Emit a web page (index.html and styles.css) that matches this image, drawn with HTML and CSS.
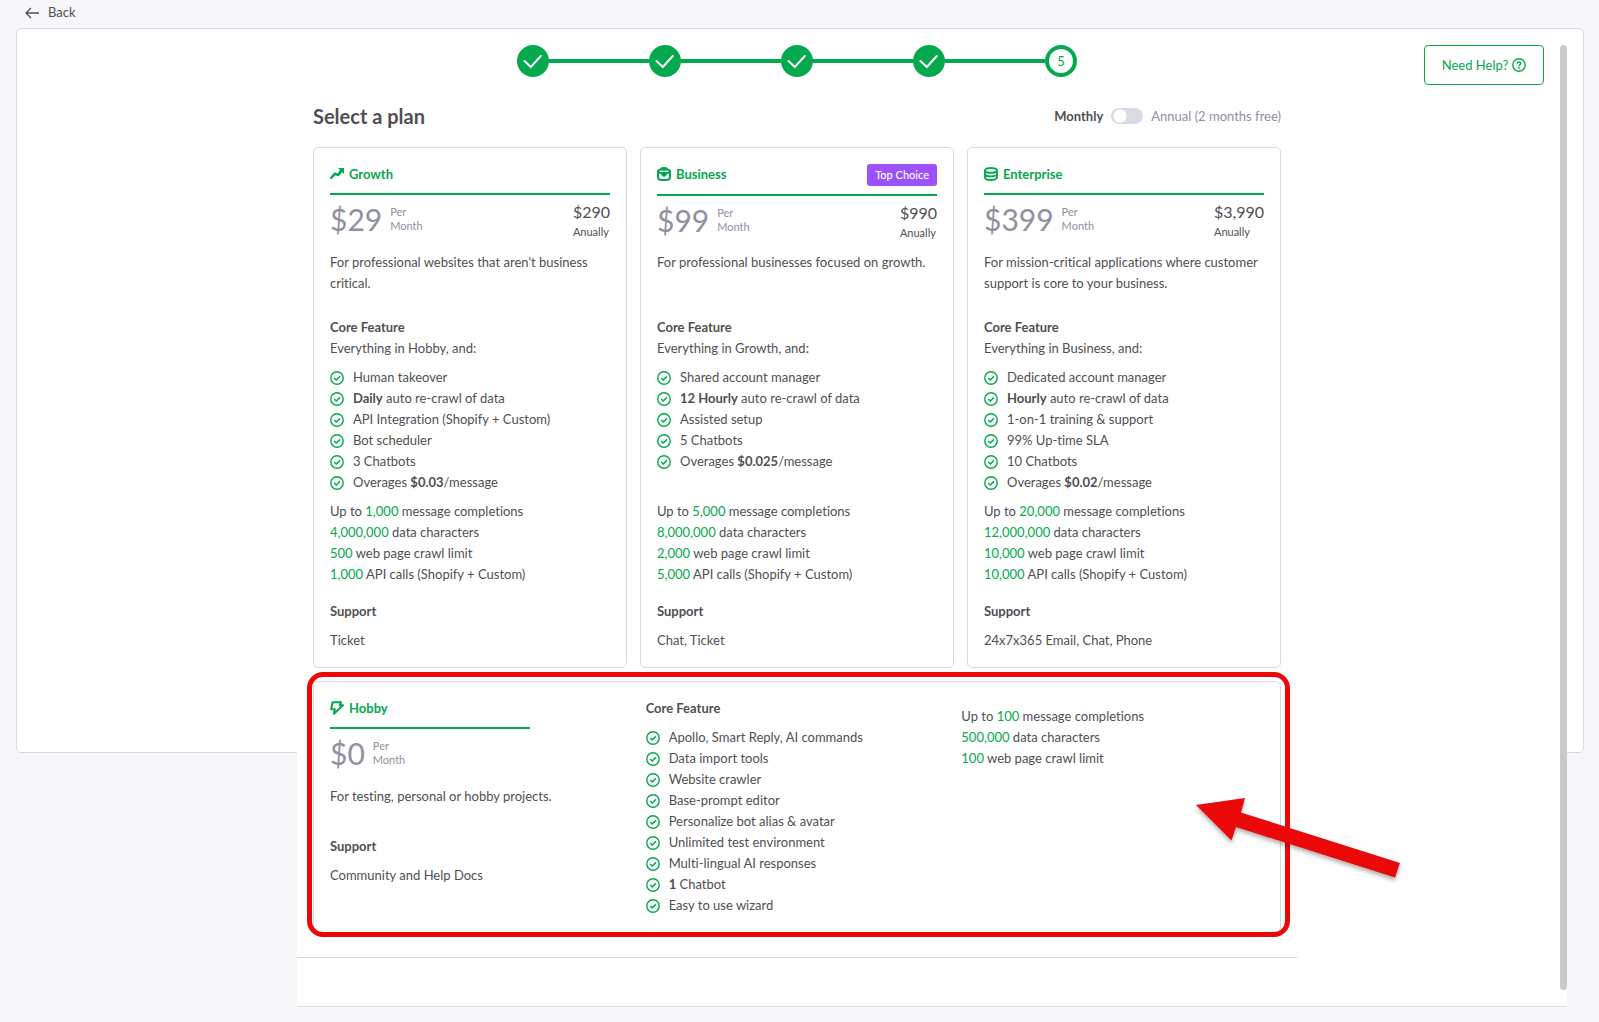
FILE: index.html
```html
<!DOCTYPE html>
<html lang="en">
<head>
<meta charset="utf-8">
<meta name="viewport" content="width=device-width, initial-scale=1">
<title>Select a plan</title>
<link rel="stylesheet" href="styles.css">
</head>
<body>
<svg class="sprite" aria-hidden="true">
  <symbol id="check-circle" viewBox="0 0 14 14"><circle cx="7" cy="7" r="6.200" fill="none" stroke="currentColor" stroke-width="1.400"/><path d="M4.200 7l2.100 2 3.600-3.600" fill="none" stroke="currentColor" stroke-width="1.500"/></symbol>
  <symbol id="check" viewBox="0 0 32 32"><path d="M7.500 16l6.300 6 10-11" fill="none" stroke="currentColor" stroke-width="2" stroke-linecap="round"/></symbol>
  <symbol id="trend" viewBox="0 0 14 14"><path d="M8 1h6v6l-1.700-1.700-4 4.200-2.800-1.200L1.500 12H0v-1.500l4.500-5.200 3.200 1.200 2.300-3.500z" fill="currentColor"/></symbol>
  <symbol id="briefcase" viewBox="0 0 14 14"><path d="M3.500 1.500Q4 0 5.500 0h3Q10 0 10.500 1.500 14 1.800 14 4.500v5Q14 14 9.500 14h-5Q0 14 0 9.500v-5Q0 1.800 3.500 1.500z" fill="currentColor"/><path d="M2.500 4.300h9" stroke="#fff" stroke-width="1.300"/><path d="M2 6.800h2Q4.700 9.800 7 9.800t3-3h2v2.700q0 2.500-2.500 2.500h-5Q2 12 2 9.500z" fill="#fff"/><path d="M4.800 6.500h4.400Q9 8.700 7 8.700T4.800 6.500z" fill="currentColor"/></symbol>
  <symbol id="database" viewBox="0 0 14 14"><g fill="none" stroke="currentColor" stroke-width="1.900"><ellipse cx="7" cy="3.400" rx="6" ry="2.400"/><path d="M1 3.400v7.200C1 12 3.700 13 7 13s6-1 6-2.400V3.400M1 7c0 1.400 2.700 2.400 6 2.400S13 8.400 13 7"/></g></symbol>
  <symbol id="bolt" viewBox="0 0 14 14"><path d="M2.500 1.200h8.700L9.700 4.300H13L4 12.800l.8-4.600H1.200z" fill="none" stroke="currentColor" stroke-width="2" stroke-linejoin="round"/></symbol>
</svg>

<nav class="topbar">
  <a class="back" href="#">
    <svg class="back-icon" viewBox="0 0 14 12" aria-hidden="true"><path d="M6 1L1 6l5 5M1 6h13" fill="none" stroke="currentColor" stroke-width="1.300"/></svg>
    Back
  </a>
</nav>

<main class="panel">
  <div class="wizard">
    <div class="content">
      <ol class="stepper">
        <li class="step"><svg><use href="#check"/></svg></li>
        <li class="step"><svg><use href="#check"/></svg></li>
        <li class="step"><svg><use href="#check"/></svg></li>
        <li class="step"><svg><use href="#check"/></svg></li>
        <li class="step step-current">5</li>
      </ol>

      <header class="heading">
        <h1>Select a plan</h1>
        <label class="billing"><b>Monthly</b><input type="checkbox" class="switch" role="switch"><span class="muted">Annual (2 months free)</span></label>
      </header>

      <div class="plans">
        <section class="card">
          <div class="card-top">
            <h2 class="plan-name"><svg class="icon"><use href="#trend"/></svg>Growth</h2>
            <div class="price"><span class="amount">$29</span><span class="period">Per<br>Month</span><p class="annual">$290<small>Anually</small></p></div>
          </div>
          <p class="summary">For professional websites that aren't business critical.</p>
          <h3>Core Feature</h3>
          <p>Everything in Hobby, and:</p>
          <ul class="features">
            <li><svg class="icon"><use href="#check-circle"/></svg><span>Human takeover</span></li>
            <li><svg class="icon"><use href="#check-circle"/></svg><span><b>Daily</b> auto re-crawl of data</span></li>
            <li><svg class="icon"><use href="#check-circle"/></svg><span>API Integration (Shopify + Custom)</span></li>
            <li><svg class="icon"><use href="#check-circle"/></svg><span>Bot scheduler</span></li>
            <li><svg class="icon"><use href="#check-circle"/></svg><span>3 Chatbots</span></li>
            <li><svg class="icon"><use href="#check-circle"/></svg><span>Overages <b>$0.03</b>/message</span></li>
          </ul>
          <p>Up to <em>1,000</em> message completions</p>
          <p><em>4,000,000</em> data characters</p>
          <p><em>500</em> web page crawl limit</p>
          <p><em>1,000</em> API calls (Shopify + Custom)</p>
          <h3 class="support">Support</h3>
          <p>Ticket</p>
        </section>

        <section class="card">
          <div class="card-top">
            <h2 class="plan-name"><svg class="icon"><use href="#briefcase"/></svg>Business<span class="badge">Top Choice</span></h2>
            <div class="price"><span class="amount">$99</span><span class="period">Per<br>Month</span><p class="annual">$990<small>Anually</small></p></div>
          </div>
          <p class="summary">For professional businesses focused on growth.</p>
          <h3>Core Feature</h3>
          <p>Everything in Growth, and:</p>
          <ul class="features">
            <li><svg class="icon"><use href="#check-circle"/></svg><span>Shared account manager</span></li>
            <li><svg class="icon"><use href="#check-circle"/></svg><span><b>12 Hourly</b> auto re-crawl of data</span></li>
            <li><svg class="icon"><use href="#check-circle"/></svg><span>Assisted setup</span></li>
            <li><svg class="icon"><use href="#check-circle"/></svg><span>5 Chatbots</span></li>
            <li><svg class="icon"><use href="#check-circle"/></svg><span>Overages <b>$0.025</b>/message</span></li>
          </ul>
          <p>Up to <em>5,000</em> message completions</p>
          <p><em>8,000,000</em> data characters</p>
          <p><em>2,000</em> web page crawl limit</p>
          <p><em>5,000</em> API calls (Shopify + Custom)</p>
          <h3 class="support">Support</h3>
          <p>Chat, Ticket</p>
        </section>

        <section class="card">
          <div class="card-top">
            <h2 class="plan-name"><svg class="icon"><use href="#database"/></svg>Enterprise</h2>
            <div class="price"><span class="amount">$399</span><span class="period">Per<br>Month</span><p class="annual">$3,990<small>Anually</small></p></div>
          </div>
          <p class="summary">For mission-critical applications where customer support is core to your business.</p>
          <h3>Core Feature</h3>
          <p>Everything in Business, and:</p>
          <ul class="features">
            <li><svg class="icon"><use href="#check-circle"/></svg><span>Dedicated account manager</span></li>
            <li><svg class="icon"><use href="#check-circle"/></svg><span><b>Hourly</b> auto re-crawl of data</span></li>
            <li><svg class="icon"><use href="#check-circle"/></svg><span>1-on-1 training &amp; support</span></li>
            <li><svg class="icon"><use href="#check-circle"/></svg><span>99% Up-time SLA</span></li>
            <li><svg class="icon"><use href="#check-circle"/></svg><span>10 Chatbots</span></li>
            <li><svg class="icon"><use href="#check-circle"/></svg><span>Overages <b>$0.02</b>/message</span></li>
          </ul>
          <p>Up to <em>20,000</em> message completions</p>
          <p><em>12,000,000</em> data characters</p>
          <p><em>10,000</em> web page crawl limit</p>
          <p><em>10,000</em> API calls (Shopify + Custom)</p>
          <h3 class="support">Support</h3>
          <p>24x7x365 Email, Chat, Phone</p>
        </section>

        <section class="card hobby">
          <div>
            <div class="card-top">
              <h2 class="plan-name"><svg class="icon"><use href="#bolt"/></svg>Hobby</h2>
              <div class="price"><span class="amount">$0</span><span class="period">Per<br>Month</span></div>
            </div>
            <p>For testing, personal or hobby projects.</p>
            <h3 class="support">Support</h3>
            <p>Community and Help Docs</p>
          </div>
          <div>
            <h3>Core Feature</h3>
            <ul class="features">
              <li><svg class="icon"><use href="#check-circle"/></svg><span>Apollo, Smart Reply, AI commands</span></li>
              <li><svg class="icon"><use href="#check-circle"/></svg><span>Data import tools</span></li>
              <li><svg class="icon"><use href="#check-circle"/></svg><span>Website crawler</span></li>
              <li><svg class="icon"><use href="#check-circle"/></svg><span>Base-prompt editor</span></li>
              <li><svg class="icon"><use href="#check-circle"/></svg><span>Personalize bot alias &amp; avatar</span></li>
              <li><svg class="icon"><use href="#check-circle"/></svg><span>Unlimited test environment</span></li>
              <li><svg class="icon"><use href="#check-circle"/></svg><span>Multi-lingual AI responses</span></li>
              <li><svg class="icon"><use href="#check-circle"/></svg><span><b>1</b> Chatbot</span></li>
              <li><svg class="icon"><use href="#check-circle"/></svg><span>Easy to use wizard</span></li>
            </ul>
          </div>
          <div class="limits">
            <p>Up to <em>100</em> message completions</p>
            <p><em>500,000</em> data characters</p>
            <p><em>100</em> web page crawl limit</p>
          </div>
          <div class="highlight"></div>
          <svg class="pointer" viewBox="0 0 215 100" aria-hidden="true"><path d="M6 12L55 5l-4 14.500L210 70l-5 14.500L46 34l-4.500 13.500z"/></svg>
        </section>
      </div>
      <footer class="footer"></footer>
    </div>

    <aside class="side">
      <button type="button" class="help">Need Help?
        <svg viewBox="0 0 14 14" aria-hidden="true"><g fill="none" stroke="currentColor"><circle cx="7" cy="7" r="6.200" stroke-width="1.400"/><path d="M5.300 5.700C5.300 4.500 6 4 7 4s1.700.6 1.700 1.500C8.700 6.600 7 6.700 7 8.200" stroke-width="1.400"/></g><circle cx="7" cy="9.900" r=".9" fill="currentColor"/></svg>
      </button>
    </aside>
    <div class="track"><div class="thumb"></div></div>
  </div>
</main>
</body>
</html>
```
FILE: styles.css
```css
:root {
  --green: #04a94d;
  --text: #4f4f52;
  --muted: #9090a0;
  --line: #d8d8e4;
}

* { box-sizing: border-box; }

body {
  margin: 0;
  min-height: 100vh;
  background: #f7f7fa;
  color: var(--text);
  font: 13px/21px Lato, sans-serif;
  font-variant-ligatures: none;
}

h1, h2, h3, p, ul, ol { margin: 0; padding: 0; }
ul, ol { list-style: none; }
h2, h3 { font-size: 13px; font-weight: 700; }
em { color: var(--green); font-style: normal; }
svg { display: block; flex: none; }
.sprite { position: absolute; width: 0; height: 0; }
.muted { color: var(--muted); }
.icon { width: 14px; height: 14px; color: var(--green); }

.topbar { height: 28px; padding: 2px 25px; }
.back {
  display: inline-flex;
  align-items: center;
  gap: 9px;
  color: inherit;
  text-decoration: none;
}
.back-icon { width: 14px; height: 12px; }

/* The wizard is taller than its panel and runs out below it. */
.panel {
  height: calc(100vh - 297px);
  margin: 0 15px 0 16px;
  padding: 16px 16px 0 17px;
  background: #fff;
  border: 1px solid var(--line);
  border-radius: 5px;
}

.wizard {
  display: grid;
  grid-template-columns: 1fr minmax(0, 1000px) 1fr 7px;
}
.content { grid-column: 2; }
.content, .side, .track {
  background: #fff;
  border-bottom: 1px solid var(--line);
}

.stepper { display: flex; justify-content: center; gap: 100px; }
.step {
  position: relative;
  width: 32px;
  height: 32px;
  border-radius: 50%;
  background: var(--green);
  color: #fff;
}
.step svg { width: 32px; height: 32px; }
.step + .step::before {
  content: "";
  position: absolute;
  right: 100%;
  top: 50%;
  width: 100px;
  height: 4px;
  margin-top: -2px;
  background: var(--green);
}
.step-current {
  display: flex;
  align-items: center;
  justify-content: center;
  background: #fff;
  border: 4px solid var(--green);
  color: var(--green);
}
.step-current::before { margin-right: 4px; }

.heading {
  display: flex;
  align-items: center;
  justify-content: space-between;
  height: 30px;
  margin: 24px 16px 16px;
}
h1 { font-size: 20px; line-height: 30px; }
.billing { display: flex; align-items: center; gap: 8px; }
.switch {
  appearance: none;
  width: 32px;
  height: 16px;
  margin: 0;
  border-radius: 8px;
  background: radial-gradient(circle at 9px 8px, #fff 6px, #d9dbe4 7px);
}

.plans {
  display: grid;
  grid-template-columns: repeat(3, minmax(0, 1fr));
  gap: 13px;
  padding: 0 16px 24px;
}
.card {
  padding: 16px;
  background: #fff;
  border: 1px solid var(--line);
  border-radius: 5px;
}
.card-top { min-height: 88px; }
.plan-name {
  display: flex;
  align-items: flex-start;
  gap: 5px;
  padding-bottom: 8px;
  border-bottom: 2px solid var(--green);
  color: var(--green);
}
.plan-name .icon { margin-top: 3px; }
.badge {
  margin-left: auto;
  padding: 0 8px;
  border-radius: 3px;
  background: #9b51fb;
  color: #fff;
  font-size: 11px;
  font-weight: 500;
  line-height: 22px;
}
.price { display: flex; align-items: flex-start; gap: 8px; padding-top: 4px; }
.amount { color: var(--muted); font-size: 30px; line-height: 40px; }
.period { margin-top: 6px; color: var(--muted); font-size: 11px; line-height: 14px; }
.annual { margin: 3px 0 0 auto; font-size: 16px; line-height: 20px; }
.annual small { display: block; font-size: 11px; }
.summary { min-height: 42px; margin-bottom: 23px; }

.features { min-height: 126px; margin: 8px 0; }
.features li { display: flex; align-items: center; gap: 9px; }
.support { margin: 16px 0 8px; }

.hobby {
  position: relative;
  grid-column: 1 / -1;
  display: grid;
  grid-template-columns: repeat(3, minmax(0, 1fr));
  gap: 13px;
}
.hobby .plan-name { max-width: 200px; }
.hobby .features { margin-bottom: 0; }
.hobby .support { margin-top: 29px; }
.limits { padding-top: 8px; }

.highlight {
  position: absolute;
  inset: -10px -10px -5px -7px;
  border: 5px solid #ea0808;
  border-radius: 16px;
}
.pointer {
  position: absolute;
  top: 111px;
  right: -125px;
  width: 215px;
  height: 100px;
  fill: #ea0808;
  filter: drop-shadow(0 3px 2px rgba(0, 0, 0, .3));
}

.footer { height: 49px; border-top: 1px solid var(--line); }

.side { padding-right: 16px; }
.help {
  display: flex;
  align-items: center;
  justify-content: center;
  gap: 4px;
  width: 120px;
  height: 40px;
  margin-left: auto;
  padding: 0;
  background: #fff;
  border: 1px solid var(--green);
  border-radius: 4px;
  color: var(--green);
  font: inherit;
}
.help svg { width: 14px; height: 14px; }

.track { padding-bottom: 16px; }
.thumb { height: 100%; border-radius: 4px; background: #cacaca; }
```
